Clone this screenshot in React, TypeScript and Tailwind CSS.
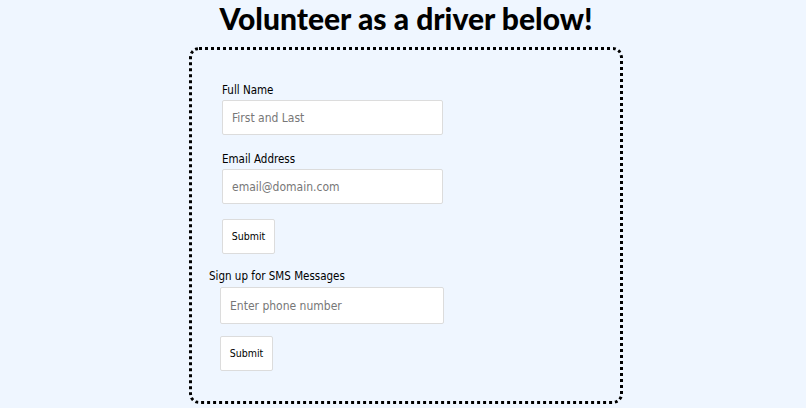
import React from 'react';

const Field = ({ label, placeholder }: { label: string; placeholder: string }) => (
  <div className="mb-[15px]">
    <label className="block text-[11.5px] leading-[19px] text-black">{label}</label>
    <input
      className="block w-[221px] h-[35px] bg-white border border-[#dcdcdc] rounded-[2px] px-[9px] text-[12px] placeholder:text-[#777] outline-none"
      placeholder={placeholder}
    />
  </div>
);

const SubmitButton = ({ className }: { className?: string }) => (
  <button className={`block w-[53px] h-[35px] bg-white border border-[#dcdcdc] rounded-[2px] text-[10.5px] text-black ${className ?? ''}`}>
    Submit
  </button>
);

export default function App() {
  return (
    <div className="min-h-screen bg-[#eff6ff] pl-[6px] font-['DejaVu_Sans',sans-serif] [font-stretch:condensed]">
      <h1 className="text-center text-[30px] leading-[36px] font-black text-black font-['Lato',sans-serif] [font-stretch:normal]">
        Volunteer as a driver below!
      </h1>
      <div className="mx-auto mt-[11px] w-[434px] border-[3px] border-dotted border-black rounded-[10px] pb-[30px]">
        <form className="pl-[30px] pt-[31px]">
          <Field label="Full Name" placeholder="First and Last" />
          <Field label="Email Address" placeholder="email@domain.com" />
          <SubmitButton />
        </form>
        <form className="pl-[17px] mt-[13px]">
          <label className="block text-[11.5px] leading-[19px] text-black">Sign up for SMS Messages</label>
          <input
            className="block ml-[11px] mt-px w-[224px] h-[37px] bg-white border border-[#dcdcdc] rounded-[2px] px-[9px] text-[12px] placeholder:text-[#777] outline-none"
            placeholder="Enter phone number"
          />
          <SubmitButton className="ml-[11px] mt-[12px]" />
        </form>
      </div>
    </div>
  );
}
